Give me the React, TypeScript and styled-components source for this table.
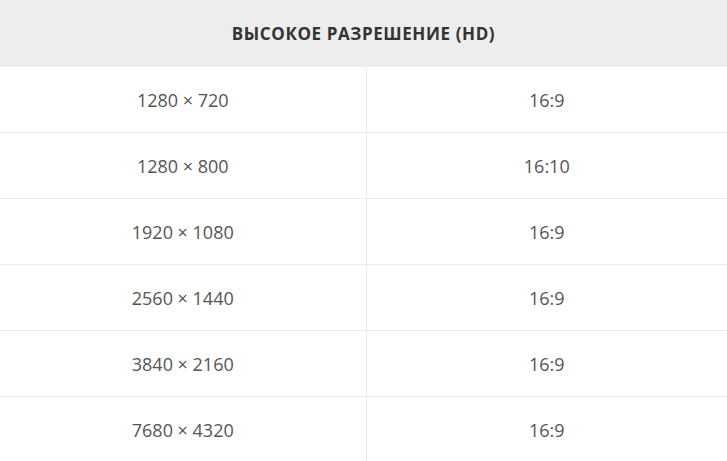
import React from "react";
import styled, { createGlobalStyle } from "styled-components";

const Global = createGlobalStyle`
  html, body { margin: 0; padding: 0; background: #fff; }
  body { font-family: "Open Sans", "Liberation Sans", sans-serif; }
`;

const Table = styled.table`
  width: 727px;
  border-collapse: collapse;
  table-layout: fixed;
`;

const HeadCell = styled.th`
  background: #ededed;
  height: 67px;
  padding: 0;
  font-size: 17px;
  font-weight: 700;
  color: #333;
  text-transform: uppercase;
  text-align: center;
  letter-spacing: 0.6px;
`;

const Row = styled.tr`
  border-bottom: 1px solid #ebebeb;
  &:last-child { border-bottom: none; }
`;

const Cell = styled.td<{ $divider?: boolean }>`
  height: 65px;
  padding: 0;
  text-align: center;
  font-size: 18px;
  color: #555;
  border-right: ${(p) => (p.$divider ? "1px solid #ebebeb" : "none")};
`;

const rows: [string, string][] = [
  ["1280 × 720", "16:9"],
  ["1280 × 800", "16:10"],
  ["1920 × 1080", "16:9"],
  ["2560 × 1440", "16:9"],
  ["3840 × 2160", "16:9"],
  ["7680 × 4320", "16:9"],
];

export default function App() {
  return (
    <>
      <Global />
      <Table>
        <colgroup>
          <col style={{ width: 366 }} />
          <col />
        </colgroup>
        <thead>
          <tr>
            <HeadCell colSpan={2}>Высокое разрешение (HD)</HeadCell>
          </tr>
        </thead>
        <tbody>
          {rows.map(([r, a]) => (
            <Row key={r}>
              <Cell $divider>{r}</Cell>
              <Cell>{a}</Cell>
            </Row>
          ))}
        </tbody>
      </Table>
    </>
  );
}
